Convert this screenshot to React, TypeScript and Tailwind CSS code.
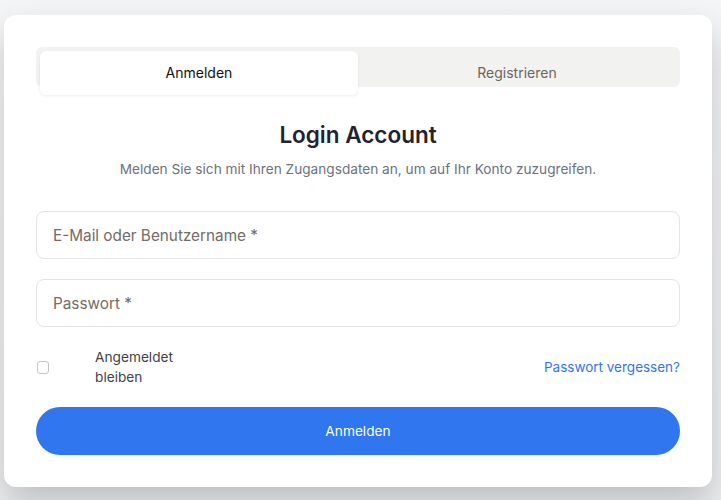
export default function App() {
  return (
    <div className="min-h-[500px] bg-gradient-to-b from-[#f4f5f7] to-[#eeeff1] px-1 pt-[15px] font-['Inter',sans-serif]">
      <div className="w-[708px] rounded-xl bg-white px-8 pt-8 pb-8 shadow-[0_18px_36px_rgba(0,0,0,0.2)]">
        <div className="flex h-10 items-start rounded-md bg-[#f2f2f0] p-1">
          <button className="flex h-11 flex-1 items-center justify-center rounded-md bg-white text-sm text-[#111111] shadow-[0_1px_3px_rgba(0,0,0,0.08)]">
            Anmelden
          </button>
          <button className="flex h-11 flex-1 items-center justify-center text-sm text-[#6b6560]">
            Registrieren
          </button>
        </div>

        <h1 className="mt-8 text-center text-[22.5px] leading-8 font-semibold text-[#1f2430]">
          Login Account
        </h1>
        <p className="mt-2 text-center text-[13.65px] leading-5 text-[#6b7280]">
          Melden Sie sich mit Ihren Zugangsdaten an, um auf Ihr Konto zuzugreifen.
        </p>

        <div className="mt-8 flex flex-col gap-5">
          <input
            className="h-12 w-full rounded-lg border border-[#e4e4e7] px-4 text-[15.3px] text-[#1f2430] outline-none placeholder:text-[#736b66]"
            placeholder="E-Mail oder Benutzername *"
          />
          <input
            type="password"
            className="h-12 w-full rounded-lg border border-[#e4e4e7] px-4 text-[15.3px] text-[#1f2430] outline-none placeholder:text-[#736b66]"
            placeholder="Passwort *"
          />
        </div>

        <div className="mt-5 flex h-10 items-center justify-between">
          <label className="flex items-center">
            <span className="ml-px h-[13px] w-[12px] rounded-[3px] border border-[#c4c4c4] bg-white" />
            <span className="ml-[46px] w-[90px] text-[13.7px] leading-5 text-[#3f3f46]">
              Angemeldet bleiben
            </span>
          </label>
          <a className="text-[13.5px] text-[#2f76ef]">Passwort vergessen?</a>
        </div>

        <button className="mt-5 h-12 w-full rounded-full bg-[#2f76ef] text-[13.7px] text-white">
          Anmelden
        </button>
      </div>
    </div>
  );
}
